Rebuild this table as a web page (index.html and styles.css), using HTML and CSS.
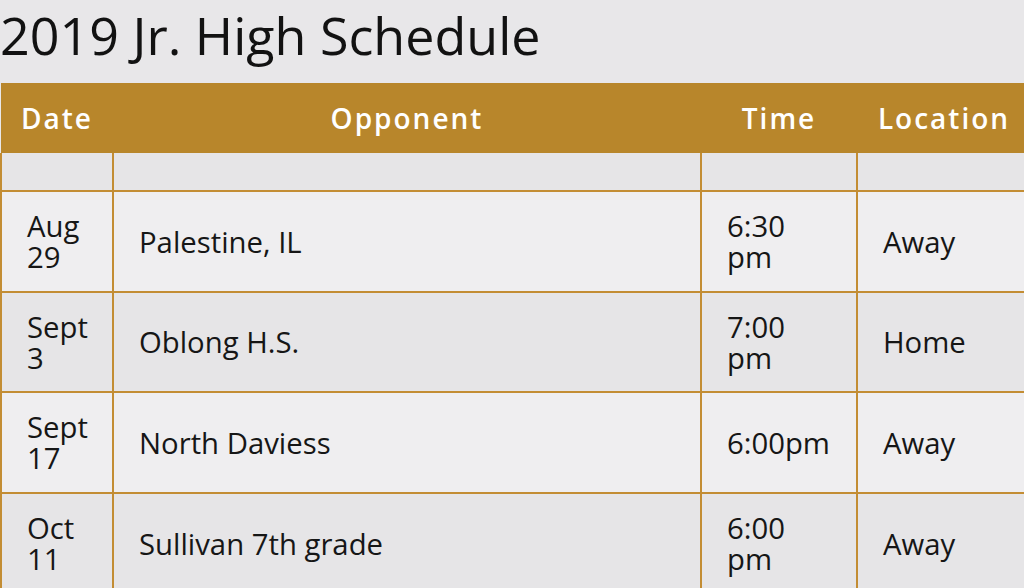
FILE: index.html
```html
<!DOCTYPE html>
<html>
<head>
<meta charset="utf-8">
<link rel="stylesheet" href="styles.css">
</head>
<body>
<h1 class="title">2019 Jr. High Schedule</h1>
<table class="schedule">
  <colgroup>
    <col class="c-date"><col class="c-opp"><col class="c-time"><col class="c-loc">
  </colgroup>
  <thead>
    <tr><th>Date</th><th>Opponent</th><th>Time</th><th>Location</th></tr>
  </thead>
  <tbody>
    <tr class="empty dark"><td></td><td></td><td></td><td></td></tr>
    <tr class="light"><td>Aug<br>29</td><td>Palestine, IL</td><td>6:30<br>pm</td><td>Away</td></tr>
    <tr class="dark"><td>Sept<br>3</td><td>Oblong H.S.</td><td>7:00<br>pm</td><td>Home</td></tr>
    <tr class="light"><td>Sept<br>17</td><td>North Daviess</td><td>6:00pm</td><td>Away</td></tr>
    <tr class="dark"><td>Oct<br>11</td><td>Sullivan 7th grade</td><td>6:00<br>pm</td><td>Away</td></tr>
  </tbody>
</table>
</body>
</html>
```

FILE: styles.css
```css
html, body {
  margin: 0;
  padding: 0;
  background: #e8e7e9;
  font-family: "Open Sans", "Noto Sans", sans-serif;
  color: #161616;
  overflow: hidden;
}
.title {
  margin: 0;
  padding: 9px 0 22px 0;
  font-size: 52px;
  line-height: 52px;
  font-weight: 400;
  color: #121212;
}
.schedule {
  border-collapse: collapse;
  table-layout: fixed;
  width: 1030px;
}
.c-date { width: 112px; }
.c-opp { width: 588px; }
.c-time { width: 156px; }
.c-loc { width: 174px; }
.schedule th {
  background: #b8862b;
  color: #ffffff;
  height: 70px;
  padding: 0;
  font-size: 28px;
  font-weight: 600;
  letter-spacing: 2px;
  text-align: center;
  vertical-align: middle;
}
.schedule td {
  border: 2px solid #c38d34;
  padding: 2px 0 0 25px;
  font-size: 29.3px;
  line-height: 31px;
  vertical-align: middle;
  height: 96.6px;
}
.schedule tr.empty td {
  height: 37px;
  padding: 0;
  border-top: none;
}
.light td { background: #efeef0; }
.dark td { background: #e6e5e7; }
```
